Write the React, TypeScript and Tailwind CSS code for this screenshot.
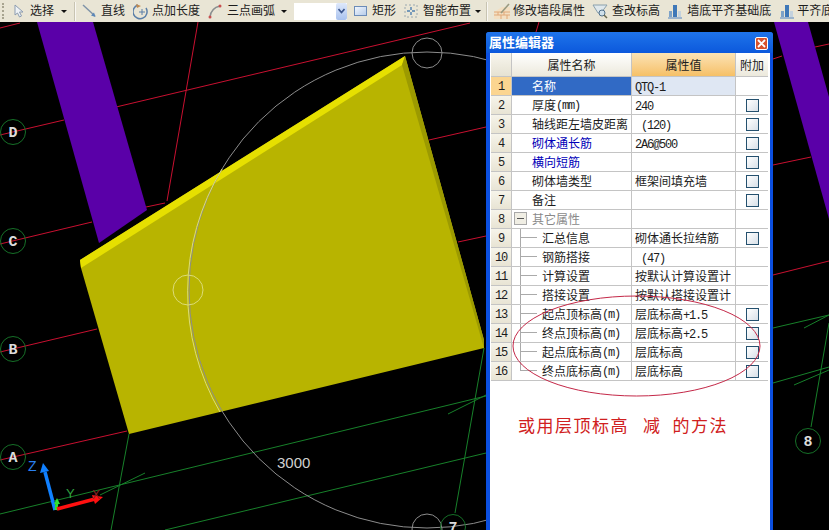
import type { ReactNode } from "react";

const CJK = "font-['Liberation_Sans','Noto_Sans_CJK_SC',sans-serif]";

// latin bits in the grid are a half-width bitmap font in the original
const M = ({ children }: { children: ReactNode }) => (
	<span className="font-['Liberation_Mono',monospace] text-[12px] tracking-[-1.2px]">
		{children}
	</span>
);

type Row = {
	name: ReactNode;
	value?: ReactNode;
	check?: boolean;
	tone?: "blue" | "gray";
	sub?: boolean;
	last?: boolean;
	minus?: boolean;
};

const rows: Row[] = [
	{ name: "名称", value: <M>QTQ-1</M> },
	{ name: <>厚度<M>(mm)</M></>, value: <M>240</M>, check: true },
	{ name: "轴线距左墙皮距离", value: <M>&nbsp;(120)</M>, check: true },
	{ name: "砌体通长筋", value: <M>2A6@500</M>, check: true, tone: "blue" },
	{ name: "横向短筋", check: true, tone: "blue" },
	{ name: "砌体墙类型", value: "框架间填充墙", check: true },
	{ name: "备注", check: true },
	{ name: "其它属性", tone: "gray", minus: true },
	{ name: "汇总信息", value: "砌体通长拉结筋", check: true, sub: true },
	{ name: "钢筋搭接", value: <M>&nbsp;(47)</M>, sub: true },
	{ name: "计算设置", value: "按默认计算设置计", sub: true },
	{ name: "搭接设置", value: "按默认搭接设置计", sub: true },
	{ name: <>起点顶标高<M>(m)</M></>, value: <>层底标高<M>+1.5</M></>, check: true, sub: true },
	{ name: <>终点顶标高<M>(m)</M></>, value: <>层底标高<M>+2.5</M></>, check: true, sub: true },
	{ name: <>起点底标高<M>(m)</M></>, value: "层底标高", check: true, sub: true },
	{ name: <>终点底标高<M>(m)</M></>, value: "层底标高", check: true, sub: true, last: true },
];

const redLines = [
	[0, 28, 20, 23],
	[0, 135, 64, 120],
	[116, 107, 470, 23],
	[0, 244, 92, 222],
	[146, 207, 165, 203],
	[429, 140, 486, 127],
	[773, 59, 782, 56],
	[815, 47, 829, 44],
	[0, 352, 97, 329],
	[458, 242, 486, 236],
	[773, 165, 811, 157],
	[0, 460, 127, 431],
	[773, 275, 829, 261],
	[198, 22, 167, 201],
	[539, 22, 536, 32],
];

const greenLines = [
	[129, 434, 111, 530],
	[0, 514, 486, 396],
	[773, 328, 829, 315],
	[165, 530, 486, 453],
	[773, 383, 829, 367],
	[100, 495, 145, 473],
	[448, 414, 486, 395],
	[804, 328, 829, 315],
	[794, 385, 829, 370],
	[484, 348, 455, 513],
	[829, 323, 811, 427],
];

const bubbles: [string, number, number][] = [
	["D", 13, 132],
	["C", 13, 241],
	["B", 13, 349],
	["A", 13, 457],
	["7", 453, 527],
	["8", 808, 441],
];

function Caret() {
	return <div className="w-0 h-0 border-x-[3px] border-x-transparent border-t-[3px] border-t-[#111]" />;
}

function Separator() {
	return <div className="w-[2px] h-[19px] border-l border-[#c8c4b2] bg-white/70" />;
}

function BuildingIcon() {
	return (
		<svg width="16" height="18" viewBox="0 0 16 18" className="block">
			<path d="M1 15 H15 V17 H1 Z" fill="#9db4cc" />
			<path d="M6 3 H10 V15 H6 Z" fill="#3f78b8" />
			<path d="M2 9 H5 V15 H2 Z" fill="#7da2c8" />
			<path d="M11 9 H14 V15 H11 Z" fill="#c4d2de" />
		</svg>
	);
}

function Toolbar() {
	return (
		<div className="h-[22px] shrink-0 flex items-center bg-[#e9e5d5] text-[12px] text-[#1c1c1c] whitespace-nowrap overflow-hidden [&>*]:shrink-0">
			<div className="ml-[2px] w-[2px] h-[16px] border-l-2 border-dotted border-[#a8a490]" />
			<svg width="10" height="14" viewBox="0 0 10 14" className="ml-[10px]">
				<path d="M1 1 L1 11 L3.5 9 L5.5 13 L7.5 12 L5.5 8 L9 8 Z" fill="#eef2f6" stroke="#8c9cb0" />
			</svg>
			<span className="ml-[6px]">选择</span>
			<div className="ml-[7px]"><Caret /></div>
			<div className="ml-[7px]"><Separator /></div>
			<svg width="15" height="14" viewBox="0 0 15 14" className="ml-[6px]">
				<path d="M1 1 L13 12" stroke="#7f93a8" strokeWidth="1.5" />
				<path d="M13.5 13 L9 11.5 L12 8.5 Z" fill="#5b87b8" />
			</svg>
			<span className="ml-[4px]">直线</span>
			<svg width="16" height="17" viewBox="0 0 16 17" className="ml-[8px]" fill="none">
				<path d="M5 2 A7 7 0 1 0 13 5" stroke="#5b7fa8" strokeWidth="1.5" />
				<path d="M3 1 L8 3 L4 5 Z" fill="#c08a50" />
				<path d="M9 6 V12 M6 9 H12" stroke="#5b7fa8" />
			</svg>
			<span className="ml-[3px]">点加长度</span>
			<svg width="15" height="15" viewBox="0 0 15 15" className="ml-[8px]" fill="none">
				<path d="M2 13 Q3 4 12 2" stroke="#8a8f90" strokeWidth="1.5" />
				<circle cx="2" cy="13" r="1.5" fill="#c85050" />
				<circle cx="12" cy="2" r="1.5" fill="#c85050" />
			</svg>
			<span className="ml-[4px]">三点画弧</span>
			<div className="ml-[6px]"><Caret /></div>
			<div className="ml-[7px] w-[53px] h-[17px] flex justify-end bg-white">
				<div className="w-[11px] h-full flex items-center justify-center rounded-[2px] bg-linear-to-b from-[#dfe9fb] to-[#a9c2ee]">
					<svg width="7" height="6" viewBox="0 0 7 6" fill="none">
						<path d="M0.5 1 L3.5 4.5 L6.5 1" stroke="#3a558c" strokeWidth="1.6" />
					</svg>
				</div>
			</div>
			<div className="ml-[7px] w-[13px] h-[10px] border border-[#6c8cb8] bg-linear-to-br from-[#f0f5fc] to-[#b8cdea]" />
			<span className="ml-[5px]">矩形</span>
			<svg width="14" height="14" viewBox="0 0 14 14" className="ml-[8px]" fill="none">
				<rect x="1" y="1" width="12" height="12" stroke="#9aa8b0" strokeDasharray="2 2" />
				<path d="M7 3 V6 M7 8 V11 M3 7 H6 M8 7 H11" stroke="#4d7fb0" strokeWidth="1.4" />
			</svg>
			<span className="ml-[5px]">智能布置</span>
			<div className="ml-[4px]"><Caret /></div>
			<div className="ml-[5px]"><Separator /></div>
			<svg width="18" height="17" viewBox="0 0 18 17" className="ml-[5px]" fill="none">
				<path d="M1 16 V9 L9 4 H17 V16 Z" fill="#f3dfc2" />
				<path d="M1 12 H17 M1 9 H17 M5 9 V12 M11 9 V12 M8 12 V16 M14 12 V16" stroke="#e0a878" />
				<path d="M8 10 L16 1" stroke="#9a9a80" strokeWidth="1.6" />
			</svg>
			<span className="ml-[2px]">修改墙段属性</span>
			<svg width="16" height="16" viewBox="0 0 16 16" className="ml-[7px]" fill="none">
				<path d="M1 2 H15 L9 10 H6 Z" fill="#dfe8ec" stroke="#8aa0ac" />
				<circle cx="10" cy="10" r="3" fill="#cfe0ea" stroke="#50708a" />
				<path d="M12 12 L15 15" stroke="#6a6a50" strokeWidth="1.5" />
			</svg>
			<span className="ml-[4px]">查改标高</span>
			<div className="ml-[7px]"><BuildingIcon /></div>
			<span className="ml-[4px]">墙底平齐基础底</span>
			<div className="ml-[8px]"><BuildingIcon /></div>
			<span className="ml-[2px]">平齐底</span>
		</div>
	);
}

function Drawing() {
	return (
		<svg viewBox="0 22 829 508" className="absolute inset-0 w-full h-full">
			{redLines.map(([x1, y1, x2, y2], i) => (
				<line key={i} x1={x1} y1={y1} x2={x2} y2={y2} stroke="#c81030" />
			))}
			{greenLines.map(([x1, y1, x2, y2], i) => (
				<line key={i} x1={x1} y1={y1} x2={x2} y2={y2} stroke="#17802a" />
			))}

			{/* walls */}
			<polygon points="37,22 93,22 147,210 99,243" fill="#5a00a8" />
			<polygon points="774,22 808,22 829,97 829,219" fill="#5a00a8" />
			<polygon points="80,260 405,56 484,340 484,348 129,434 81,268" fill="#b8b400" />
			<polygon points="80,260 405,56 402,65 81,268" fill="#e6e000" />
			<polygon points="405,56 484,340 484,348 402,65" fill="#9c9a00" />

			{/* snap circle */}
			<circle cx="427" cy="290" r="238" fill="none" stroke="#8c8c8c" />
			<path d="M222 169 A238 238 0 0 0 220 412" fill="none" stroke="#dcdc78" />
			<circle cx="188" cy="290" r="15" fill="none" stroke="#dcdc78" />
			<circle cx="427" cy="53" r="15" fill="none" stroke="#8c8c8c" />
			<circle cx="427" cy="529" r="15" fill="none" stroke="#8c8c8c" />
			<text x="277" y="468" fontSize="15" fill="#d0d0d0" fontFamily="Liberation Sans">3000</text>

			{bubbles.map(([label, x, y]) => (
				<g key={label}>
					<circle cx={x} cy={y} r="12.5" fill="none" stroke="#167028" />
					<text x={x} y={y + 5} fontSize="15" fontWeight="bold" textAnchor="middle" fill="#dcdcdc" fontFamily="Liberation Mono">
						{label}
					</text>
				</g>
			))}

			{/* axis */}
			<line x1="55" y1="510" x2="45" y2="472" stroke="#1080ff" strokeWidth="3.5" />
			<polygon points="43,463 40,473 49,471" fill="#1080ff" />
			<line x1="56" y1="510" x2="57" y2="502" stroke="#30e030" strokeWidth="3" />
			<polygon points="57,498 54,504 60,504" fill="#30e030" />
			<line x1="57" y1="509" x2="95" y2="499" stroke="#ff1010" strokeWidth="3.5" />
			<polygon points="103,497 92,495 95,504" fill="#ff1010" />
			<text x="28" y="471" fontSize="14" fill="#2a80f0" fontFamily="Liberation Sans">Z</text>
			<text x="66" y="498" fontSize="13" fill="#30a040" fontFamily="Liberation Sans">Y</text>
			<text x="92" y="499" fontSize="12" fill="#8a2020" fontFamily="Liberation Sans">X</text>
		</svg>
	);
}

function GridRow({ row, index }: { row: Row; index: number }) {
	const selected = index === 0;
	const tone = selected
		? "text-white"
		: row.tone === "blue"
			? "text-[#0000b8]"
			: row.tone === "gray"
				? "text-[#8a8a8a]"
				: "text-[#1c1c1c]";

	return (
		<div className="h-[19px] flex border-b border-[#c4c4c4] leading-[21px]">
			<div
				className={`w-[21px] shrink-0 flex justify-center border-r border-[#c4c4c4] text-[#1c1c1c] ${
					selected
						? "bg-[#fbd590]"
						: "bg-linear-to-b from-[#f6f4ea] to-[#e8e4d4]"
				}`}
			>
				<M>{index + 1}</M>
			</div>
			<div
				className={`w-[120px] shrink-0 flex border-r border-[#c4c4c4] overflow-hidden whitespace-nowrap ${tone} ${
					selected ? "bg-[#316ac5]" : ""
				} ${row.sub ? "pl-[8px]" : row.minus ? "pl-[2px]" : "pl-[20px]"}`}
			>
				{row.minus && (
					<div className="w-[13px] h-[13px] mt-[2px] mr-[5px] shrink-0 flex items-center justify-center border border-[#a8a8a8] bg-[#f0eee4]">
						<div className="w-[7px] h-px bg-[#555]" />
					</div>
				)}
				{row.sub && (
					<div className="w-[17px] mr-[5px] shrink-0 flex flex-col">
						<div className="h-1/2 border-l border-b border-[#aaaaaa]" />
						{!row.last && <div className="h-1/2 border-l border-[#aaaaaa]" />}
					</div>
				)}
				{row.name}
			</div>
			<div
				className={`w-[104px] shrink-0 pl-[3px] border-r border-[#c4c4c4] overflow-hidden whitespace-nowrap text-[#1c1c1c] ${
					selected ? "bg-[#dfe7f3]" : ""
				}`}
			>
				{row.value}
			</div>
			<div className="w-[32px] shrink-0 flex items-center justify-center pt-px">
				{row.check && (
					<div className="w-[13px] h-[13px] border border-[#24506e] bg-linear-to-br from-white to-[#d8e0e8]" />
				)}
			</div>
		</div>
	);
}

function PropertyEditor() {
	return (
		<div className="absolute left-[486px] top-[10px] w-[287px] h-[498px] flex flex-col rounded-t-[3px] bg-[#0b4fe0]">
			<div className="h-[21px] shrink-0 flex items-center justify-between pl-[3px] pr-[5px] pt-px rounded-t-[3px] bg-linear-to-b from-[#1f74ea] to-[#0c58dc]">
				<span className="text-white text-[13px] font-bold">属性编辑器</span>
				<div className="w-[13px] h-[13px] flex items-center justify-center rounded-[2px] border border-white bg-[#d8522c]">
					<svg width="9" height="9" viewBox="0 0 9 9">
						<path d="M1 1 L8 8 M8 1 L1 8" stroke="white" strokeWidth="1.8" />
					</svg>
				</div>
			</div>
			<div className="flex-1 ml-[4px] mr-[3px] pl-px pr-[2px] bg-white">
				<div className="h-[24px] flex border-b border-[#c4c4c4] leading-[26px] text-center text-[#1c1c1c]">
					<div className="w-[21px] shrink-0 border-r border-[#c4c4c4] bg-linear-to-b from-[#f8f6ee] to-[#e6e2d2]" />
					<div className="w-[120px] shrink-0 border-r border-[#c4c4c4] bg-linear-to-b from-white to-[#ece9dc]">属性名称</div>
					<div className="w-[104px] shrink-0 border-r border-[#c4c4c4] bg-linear-to-b from-[#fbe3b4] to-[#f6c066]">属性值</div>
					<div className="w-[32px] shrink-0 bg-linear-to-b from-white to-[#ece9dc]">附加</div>
				</div>
				{rows.map((row, i) => (
					<GridRow key={i} row={row} index={i} />
				))}
				<p className="mt-[34px] ml-[27px] flex text-[17px] leading-[24px] tracking-[1.5px] text-[#d02020]">
					<span>或用层顶标高</span>
					<span className="ml-[14px]">减</span>
					<span className="ml-[11px]">的方法</span>
				</p>
			</div>
		</div>
	);
}

export default function App() {
	return (
		<div className={`w-[829px] h-[530px] flex flex-col overflow-hidden bg-black text-[12px] ${CJK}`}>
			<Toolbar />
			<div className="relative flex-1">
				<Drawing />
				<PropertyEditor />
				{/* hand drawn mark on top of the grid */}
				<svg viewBox="0 22 829 508" className="absolute inset-0 w-full h-full pointer-events-none">
					<ellipse cx="636.5" cy="346" rx="123.5" ry="50" fill="none" stroke="#c42848" />
				</svg>
			</div>
		</div>
	);
}
